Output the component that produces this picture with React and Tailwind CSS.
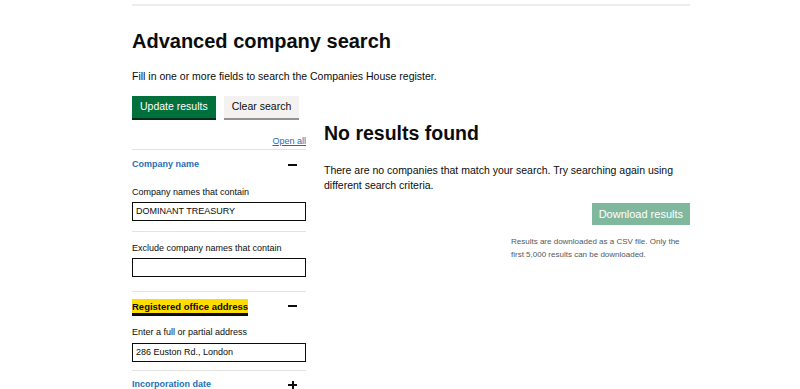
export default function App() {
  const font = { fontFamily: '"Liberation Sans", Arial, sans-serif' };
  return (
    <div className="w-[800px] h-[389px] bg-white overflow-hidden text-[#0b0c0c]" style={font}>
      <div className="w-[558px] ml-[132px]">
        <div className="pt-[4px]">
          <div className="h-[2px] bg-[#ededed]" />
        </div>
        <h1 className="mt-[22px] text-[20px] leading-[26px] font-bold">Advanced company search</h1>
        <p className="mt-[15px] text-[10.5px] leading-[14px]">Fill in one or more fields to search the Companies House register.</p>
        <div className="mt-[13px] flex gap-[8px]">
          <button className="h-[22px] px-[8px] bg-[#00703c] text-white text-[10.5px] shadow-[0_2px_0_#002d18]">Update results</button>
          <button className="h-[22px] px-[8px] bg-[#f3f2f1] text-[#0b0c0c] text-[10.5px] shadow-[0_2px_0_#929191]">Clear search</button>
        </div>
        <div className="flex gap-[18px] mt-[8px]">
          <div className="w-[174px] shrink-0">
            <div className="flex justify-end pt-[10px]">
              <a className="text-[9px] leading-[11px] text-[#1d70b8] underline">Open all</a>
            </div>
            <div className="mt-[2px] h-px bg-[#e3e3e3]" />
            <div className="flex items-center justify-between h-[30px]">
              <span className="text-[9px] font-bold text-[#1d70b8]">Company name</span>
              <span className="w-[9px] h-[2px] bg-[#0b0c0c] mr-[9px]" />
            </div>
            <div className="pt-[7px]">
              <label className="block text-[9px] leading-[11px]">Company names that contain</label>
              <div className="mt-[4px] h-[19px] border-[1.5px] border-[#0b0c0c] px-[3px] flex items-center text-[9px]">DOMINANT TREASURY</div>
            </div>
            <div className="mt-[10px] h-px bg-[#e3e3e3]" />
            <div className="pt-[11px]">
              <label className="block text-[9px] leading-[11px]">Exclude company names that contain</label>
              <div className="mt-[4px] h-[19px] border-[1.5px] border-[#0b0c0c]" />
            </div>
            <div className="mt-[14px] h-px bg-[#e3e3e3]" />
            <div className="flex items-center justify-between h-[28px]">
              <span className="text-[9.5px] font-bold text-[#0b0c0c] bg-[#ffdd00] shadow-[0_3px_0_#0b0c0c] leading-[13px] pt-px">Registered office address</span>
              <span className="w-[9px] h-[2px] bg-[#0b0c0c] mr-[9px]" />
            </div>
            <div className="pt-[7px]">
              <label className="block text-[9px] leading-[11px]">Enter a full or partial address</label>
              <div className="mt-[5px] h-[19px] border-[1.5px] border-[#0b0c0c] px-[3px] flex items-center text-[9px]">286 Euston Rd., London</div>
            </div>
            <div className="mt-[8px] h-px bg-[#e3e3e3]" />
            <div className="flex items-center justify-between h-[28px]">
              <span className="text-[9px] font-bold text-[#1d70b8]">Incorporation date</span>
              <span className="relative w-[9px] h-[9px] mr-[9px]">
                <span className="absolute left-0 top-[3.5px] w-[9px] h-[2px] bg-[#0b0c0c]" />
                <span className="absolute top-0 left-[3.5px] w-[2px] h-[9px] bg-[#0b0c0c]" />
              </span>
            </div>
          </div>
          <div className="flex-1 min-w-0">
            <h2 className="-mt-[3px] text-[19.5px] leading-[20px] font-bold">No results found</h2>
            <p className="mt-[20px] text-[10.5px] leading-[15px]">There are no companies that match your search. Try searching again using different search criteria.</p>
            <div className="flex justify-end mt-[10px]">
              <button className="h-[22px] px-[7px] bg-[#80b89e] text-white text-[11px]">Download results</button>
            </div>
            <p className="mt-[10px] ml-[187px] -mr-[2px] text-[8px] leading-[13px] text-[#505a5f]">Results are downloaded as a CSV file. Only the first 5,000 results can be downloaded.</p>
          </div>
        </div>
      </div>
    </div>
  );
}
